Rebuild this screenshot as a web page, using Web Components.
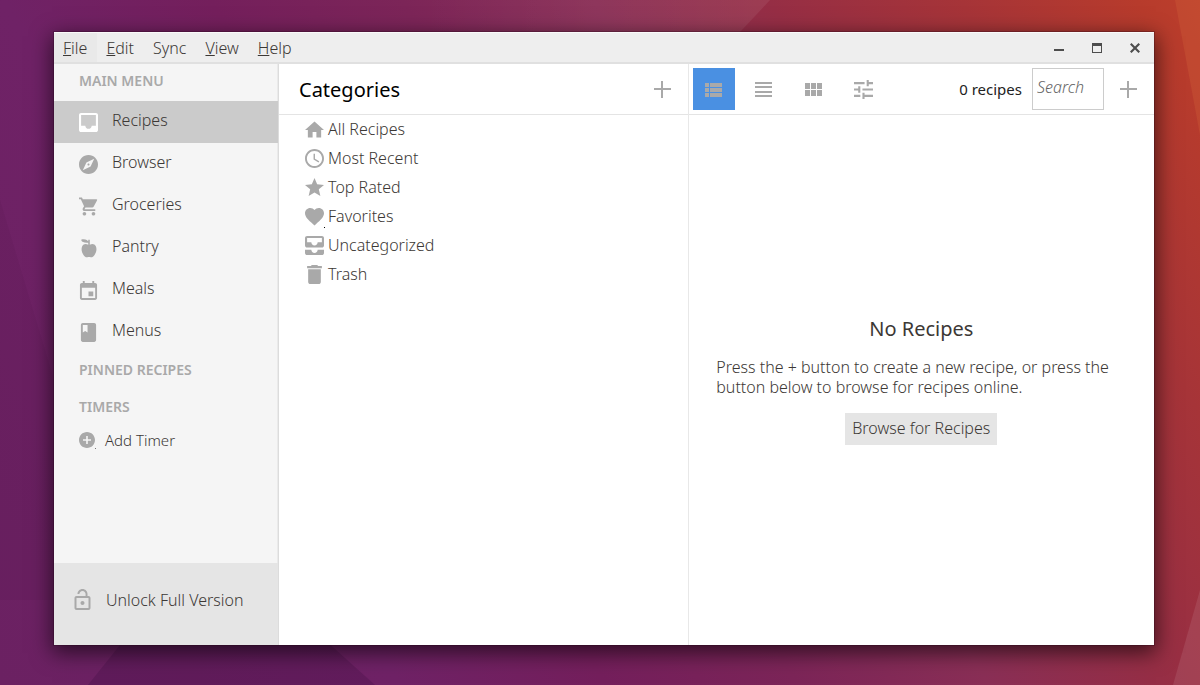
<!DOCTYPE html>
<html lang="en">
<head>
<meta charset="utf-8">
<title>Recipes</title>
<style>
html,body{height:100%}
body{margin:0;font-family:"Noto Sans","Open Sans",sans-serif;font-size:16px;font-weight:300;color:#3c3835}
</style>
</head>
<body>
<desk-top>
  <app-window>
    <menu-bar slot="menu"></menu-bar>
    <side-bar slot="side">
      <nav-section label="Main Menu">
        <nav-item icon="inbox" active>Recipes</nav-item>
        <nav-item icon="compass">Browser</nav-item>
        <nav-item icon="cart">Groceries</nav-item>
        <nav-item icon="apple">Pantry</nav-item>
        <nav-item icon="calendar">Meals</nav-item>
        <nav-item icon="book">Menus</nav-item>
      </nav-section>
      <nav-section label="Pinned Recipes"></nav-section>
      <nav-section label="Timers"><add-timer></add-timer></nav-section>
      <unlock-button slot="footer">Unlock Full Version</unlock-button>
    </side-bar>
    <category-pane slot="categories">
      <category-item icon="home">All Recipes</category-item>
      <category-item icon="clock">Most Recent</category-item>
      <category-item icon="star">Top Rated</category-item>
      <category-item icon="heart" dot>Favorites</category-item>
      <category-item icon="allinbox">Uncategorized</category-item>
      <category-item icon="trash">Trash</category-item>
    </category-pane>
    <recipe-pane slot="recipes">
      <empty-state></empty-state>
    </recipe-pane>
  </app-window>
</desk-top>
<script>
const ICONS = {
  inbox:['3 3 18 18','M19 3H4.99C3.88 3 3 3.9 3 5v14c0 1.100.88 2 1.990 2H19c1.100 0 2-.9 2-2V5c0-1.100-.9-2-2-2zm0 12h-4c0 1.660-1.350 3-3 3s-3-1.340-3-3H4.990V5H19v10z'],
  compass:['2 2 20 20','M12 10.900c-.61 0-1.100.49-1.100 1.100s.49 1.100 1.100 1.100c.61 0 1.100-.49 1.100-1.100s-.49-1.100-1.100-1.100zM12 2C6.480 2 2 6.480 2 12s4.480 10 10 10 10-4.480 10-10S17.520 2 12 2zm2.190 12.190L6 18l3.810-8.190L18 6l-3.810 8.190z'],
  cart:['1 2 21 20','M7 18c-1.100 0-1.990.9-1.990 2S5.900 22 7 22s2-.9 2-2-.9-2-2-2zM1 2v2h2l3.600 7.590-1.350 2.450c-.16.28-.25.61-.25.96 0 1.100.9 2 2 2h12v-2H7.420c-.14 0-.25-.11-.25-.25l.03-.12.9-1.630h7.450c.75 0 1.410-.41 1.750-1.030l3.580-6.490A1 1 0 0 0 20 4H5.210l-.94-2H1zm16 16c-1.100 0-1.990.9-1.990 2s.89 2 1.990 2 2-.9 2-2-.9-2-2-2z'],
  apple:['1 2 22 22','M20.500 10.500c1.500 3.500.5 7-1.500 10-1.200 2-3 3-4.500 2.700-1.400-.5-2.400-.5-3.800 0-1.500.3-3.300-.7-4.500-2.700-2-3-3-6.500-1.500-10 1.500-3 4.500-3.200 7-1.700V6.200C9.500 6.500 7 6.200 5 5.200 4.200 4.700 3.700 3.900 3.500 2.800c2.500-.8 4.800-.5 6.500.5.800.5 1.300 1 1.700 1.600V3h1.800v5.800c2.500-1.500 5.500-1.300 7 1.700z'],
  calendar:['3 1 18 20','M17 12h-5v5h5v-5zM16 1v2H8V1H6v2H5c-1.110 0-1.990.9-1.990 2L3 19c0 1.100.89 2 2 2h14c1.100 0 2-.9 2-2V5c0-1.100-.9-2-2-2h-1V1h-2zm3 18H5V8h14v11z'],
  book:['3 2 18 20','M18 2H6c-1.100 0-2 .9-2 2v16c0 1.100.9 2 2 2h12c1.100 0 2-.9 2-2V4c0-1.100-.9-2-2-2zM6 4h5v8l-2.500-1.500L6 12V4z'],
  addcircle:['2 2 20 20','M12 2C6.480 2 2 6.480 2 12s4.480 10 10 10 10-4.480 10-10S17.520 2 12 2zm5 11h-4v4h-2v-4H7v-2h4V7h2v4h4v2z'],
  lock:['3 1 18 22','M12 17c1.100 0 2-.9 2-2s-.9-2-2-2-2 .9-2 2 .9 2 2 2zm6-9h-1V6c0-2.760-2.240-5-5-5S7 3.240 7 6h1.900c0-1.710 1.390-3.100 3.100-3.100s3.100 1.390 3.100 3.100v2H6c-1.100 0-2 .9-2 2v10c0 1.100.9 2 2 2h12c1.100 0 2-.9 2-2V10c0-1.100-.9-2-2-2zm0 12H6V10h12v10z'],
  home:['2 2 20 19','M10 20v-6h4v6h5v-8h3L12 3 2 12h3v8z'],
  clock:['2 2 20 20','M11.990 2C6.470 2 2 6.480 2 12s4.470 10 9.990 10C17.520 22 22 17.520 22 12S17.520 2 11.990 2zM12 20c-4.420 0-8-3.580-8-8s3.580-8 8-8 8 3.580 8 8-3.580 8-8 8zm.5-13H11v6l5.250 3.150.75-1.230-4.500-2.670z'],
  star:['2 2 20 20','M12 17.270L18.180 21l-1.640-7.030L22 9.240l-7.190-.61L12 2 9.190 8.630 2 9.240l5.460 4.730L5.820 21z'],
  heart:['2 2 20 20','M12 21.350l-1.450-1.320C5.400 15.360 2 12.280 2 8.500 2 5.420 4.420 3 7.500 3c1.740 0 3.410.81 4.500 2.090C13.090 3.810 14.760 3 16.500 3 19.580 3 22 5.420 22 8.500c0 3.780-3.400 6.860-8.550 11.540L12 21.350z'],
  allinbox:['3 3 18 18','M19 3H5c-1.100 0-2 .9-2 2v7c0 1.100.9 2 2 2h14c1.100 0 2-.9 2-2V5c0-1.100-.9-2-2-2zm0 6h-4c0 1.620-1.380 3-3 3s-3-1.380-3-3H5V5h14v4zm-4 7h6v3c0 1.100-.9 2-2 2H5c-1.100 0-2-.9-2-2v-3h6c0 1.660 1.340 3 3 3s3-1.340 3-3z'],
  trash:['3 3 18 18','M6 19c0 1.100.9 2 2 2h8c1.100 0 2-.9 2-2V7H6v12zM19 4h-3.500l-1-1h-5l-1 1H5v2h14V4z'],
  plus:['0 0 19 19','M8 1h2v7h8v2h-8v8H8v-8H1V8h7z'],
  viewlist:['0 0 19 19','M1 3h4v4H1zm5 0h12v4H6zM1 8h4v4H1zm5 0h12v4H6zM1 13h4v4H1zm5 0h12v4H6z'],
  headline:['0 0 19 19','M1 2h17v2H1zm0 4h17v2H1zm0 5h17v2H1zm0 4h17v2H1z'],
  modules:['0 0 19 19','M1 3h5v6H1zm6 0h5v6H7zm6 0h5v6h-5zM1 10h5v6H1zm6 0h5v6H7zm6 0h5v6h-5z'],
  tune:['3 3 18 18','M3 17v2h6v-2H3zM3 5v2h10V5H3zm10 16v-2h8v-2h-8v-2h-2v6h2zM7 9v2H3v2h4v2h2V9H7zm14 4v-2H11v2h10zm-6-4h2V7h4V5h-4V3h-2v6z'],
  minimize:['0 0 12 12','M1 7h10v2H1z'],
  maximize:['0 0 12 12','M1 1h10v10H1zM2 4v6h8V4z'],
  close:['0 0 12 12','M1 2.500 2.500 1 6 4.500 9.500 1 11 2.500 7.500 6 11 9.500 9.500 11 6 7.500 2.500 11 1 9.500 4.500 6z']
};
const RESET = `*{box-sizing:border-box}
button{font:inherit;color:inherit;background:none;border:0;margin:0;padding:0;text-align:left}
h1,h2,p,ul{margin:0;padding:0;font-weight:inherit}`;

function define(name, css, html) {
  customElements.define(name, class extends HTMLElement {
    constructor() {
      super();
      this.attachShadow({mode:'open'});
    }
    connectedCallback() {
      const body = typeof html === 'function' ? html(this) : html;
      this.shadowRoot.innerHTML = `<style>${RESET}${css}</style>${body}`;
    }
  });
}

define('icon-glyph', `:host{display:block;flex:none;width:19px;height:19px;color:#a9a9a9}
svg{display:block;width:100%;height:100%}`,
  el => { const [box, d] = ICONS[el.getAttribute('name')];
    return `<svg viewBox="${box}" fill="currentColor" fill-rule="evenodd" aria-hidden="true"><path d="${d}"/></svg>`; });

define('desk-top', `:host{display:grid;min-height:100vh;padding:32px 46px 40px 54px;box-sizing:border-box;position:relative;overflow:hidden;
background:linear-gradient(60deg,#6b2162 0%,#6f2266 25%,#741f5c 38%,#7c2558 50%,#8a2f56 62%,#962e45 73%,#a63438 85%,#b73b2c 96%,#bc3f2c 100%)}
.facets{position:absolute;inset:0;width:100%;height:100%}
slot{display:grid}
::slotted(*){position:relative}`,
`<svg class="facets" viewBox="0 0 1200 685" preserveAspectRatio="none" aria-hidden="true">
<defs><linearGradient id="sheen"><stop offset="0" stop-color="#fff" stop-opacity="0"/><stop offset="1" stop-color="#fff" stop-opacity=".07"/></linearGradient></defs>
<path d="M420 0H770L740 32 420 500z" fill="url(#sheen)"/>
<path d="M1175 0H1200V135z" fill="#e07a40" fill-opacity=".2"/>
<path d="M1200 590V685H1173z" fill="#fff" fill-opacity=".09"/>
<path d="M0 200 60 400V600H0z" fill="#20002a" fill-opacity=".05"/>
<path d="M124 640 88 685H375L325 640z" fill="#20002a" fill-opacity=".16"/>
</svg><slot></slot>`);

define('app-window', `:host{display:grid;grid-template-rows:32px 1fr;background:#fff;box-shadow:0 0 0 1px rgba(30,0,20,.25),0 6px 20px 2px rgba(0,0,0,.6)}
.body{display:grid;grid-template-columns:225px 22fr 25fr}
.body ::slotted(*){min-width:0}`,
`<slot name="menu"></slot><main class="body"><slot name="side"></slot><slot name="categories"></slot><slot name="recipes"></slot></main>`);

define('menu-bar', `:host{display:flex;justify-content:space-between;background:#eee;border-top:1px solid #fafafa;border-bottom:2px solid #e0e0e0}
nav,.controls{display:flex}
nav button{padding:0 10px 0 9px}
nav button:first-child{background:#e9e9e9}
.controls{gap:26px;padding-right:13px;align-items:center}
.controls icon-glyph{width:12px;height:12px;color:#4d4d4d}
u{text-underline-offset:1px}`,
`<nav aria-label="Menu bar"><button><u>F</u>ile</button><button><u>E</u>dit</button><button>Sync</button><button><u>V</u>iew</button><button><u>H</u>elp</button></nav>
<div class="controls"><button aria-label="Minimize"><icon-glyph name="minimize"></icon-glyph></button><button aria-label="Maximize"><icon-glyph name="maximize"></icon-glyph></button><button aria-label="Close"><icon-glyph name="close"></icon-glyph></button></div>`);

define('side-bar', `:host{display:flex;flex-direction:column;background:#f5f5f5;border-right:1px solid #dcdcdc;box-shadow:inset -1px 0 #eaeaea}
nav{flex:1;display:flex;flex-direction:column;gap:1px;padding-top:1px}`,
`<nav aria-label="Main"><slot></slot></nav><slot name="footer"></slot>`);

define('nav-section', `:host{display:block}
h2{font-size:14px;font-weight:600;line-height:32px;margin-bottom:4px;padding-left:25px;color:#a9a9a9;text-transform:uppercase}`,
  el => `<h2>${el.getAttribute('label')}</h2><slot></slot>`);

define('nav-item', `:host{display:block}
:host([active]){background:#cbcbcb}
button{display:flex;gap:14px;align-items:center;width:100%;height:42px;padding-left:25px}
:host([active]) icon-glyph{color:#fff}
span{padding-bottom:4px}`,
  el => `<button><icon-glyph name="${el.getAttribute('icon')}"></icon-glyph><span><slot></slot></span></button>`);

define('add-timer', `:host{display:block}
button{display:flex;gap:10px;align-items:center;font-size:15px;line-height:26px;padding-left:25px}
.mark{position:relative}
.mark::after{content:"";position:absolute;right:-1px;bottom:-1px;width:1px;height:1px;background:#777}
icon-glyph{width:16px;height:16px}`,
`<button><span class="mark"><icon-glyph name="addcircle"></icon-glyph></span>Add Timer</button>`);

define('unlock-button', `:host{display:block;background:#e5e5e5}
button{display:flex;gap:14px;align-items:center;width:100%;height:82px;padding:0 0 8px 19px}
icon-glyph{height:22px}`,
`<button><icon-glyph name="lock"></icon-glyph><slot></slot></button>`);

define('category-pane', `:host{display:block;border-right:1px solid #e8e8e8}
header{display:flex;align-items:center;justify-content:space-between;height:51px;padding:0 16px 0 20px;border-bottom:1px solid #e4e4e4}
h1{font-size:20px;font-weight:400;color:#000}
ul{list-style:none}`,
`<header><h1>Categories</h1><button aria-label="Add category"><icon-glyph name="plus"></icon-glyph></button></header><ul><slot></slot></ul>`);

define('category-item', `:host{display:list-item;list-style:none}
button{display:flex;gap:4px;align-items:center;width:100%;height:29px;padding-left:26px}
.mark{position:relative}
:host([dot]) .mark::after{content:"";position:absolute;right:-1px;bottom:-2px;width:1px;height:1px;background:#000}
.text{padding-bottom:2px}`,
  el => `<button><span class="mark"><icon-glyph name="${el.getAttribute('icon')}"></icon-glyph></span><span class="text"><slot></slot></span></button>`);

define('recipe-pane', `:host{display:flex;flex-direction:column}
header{display:flex;align-items:center;height:51px;padding:0 16px 0 4px;border-bottom:1px solid #e4e4e4}
.views{display:flex;gap:8px;flex:1}
.views button{display:grid;place-items:center;width:42px;height:42px}
.views .on{background:#4a90e2}
.count{font-size:15px;font-weight:400;color:#222}
input{width:72px;height:42px;margin:0 15px 0 10px;padding:0 4px 4px;border:1px solid #ccc;font:inherit;background:#fff}
input::placeholder{font-style:italic;color:#666}
::slotted(*){flex:1}`,
`<header><div class="views"><button class="on" aria-label="Detailed list"><icon-glyph name="viewlist"></icon-glyph></button><button aria-label="Compact list"><icon-glyph name="headline"></icon-glyph></button><button aria-label="Grid"><icon-glyph name="modules"></icon-glyph></button><button aria-label="Options"><icon-glyph name="tune"></icon-glyph></button></div>
<span class="count">0 recipes</span><input type="text" placeholder="Search" aria-label="Search"><button aria-label="Add recipe"><icon-glyph name="plus"></icon-glyph></button></header><slot></slot>`);

define('empty-state', `:host{display:flex;flex-direction:column;align-items:center;justify-content:center;padding:0 24px}
h2{font-size:20px;font-weight:400;line-height:28px;margin-bottom:14px}
p{max-width:410px;line-height:20px;margin-bottom:16px}
button{height:32px;padding:0 7px 2px;background:#e5e5e5}`,
`<h2>No Recipes</h2><p>Press the + button to create a new recipe, or press the button below to browse for recipes online.</p><button>Browse for Recipes</button>`);
</script>
</body>
</html>
